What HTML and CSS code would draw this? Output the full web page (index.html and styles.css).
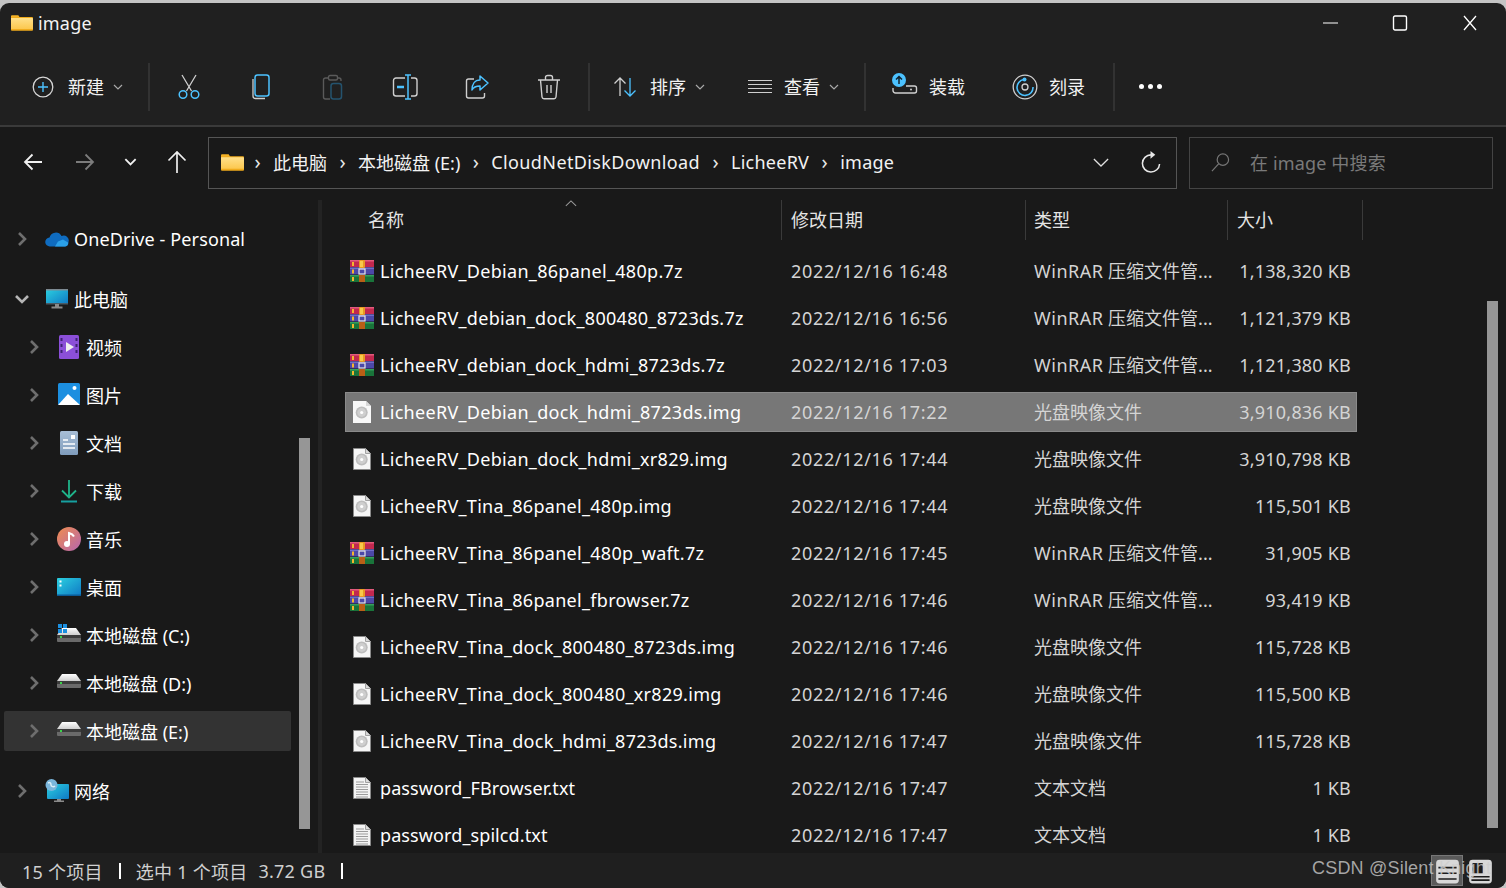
FILE: index.html
```html
<!DOCTYPE html>
<html lang="zh-CN">
<head>
<meta charset="utf-8">
<title>image</title>
<link rel="stylesheet" href="styles.css">
</head>
<body>
<svg class="defs" aria-hidden="true">
  <defs>
    <linearGradient id="fold" x1="0" y1="0" x2="0" y2="1"><stop offset="0" stop-color="#ffe08a"/><stop offset="1" stop-color="#fcc84f"/></linearGradient>
    <linearGradient id="screen" x1="0" y1="0" x2="1" y2="1"><stop offset="0" stop-color="#2bd0e0"/><stop offset="1" stop-color="#0f78c4"/></linearGradient>
    <linearGradient id="music" x1="0" y1="0" x2="1" y2="1"><stop offset="0" stop-color="#f08d4e"/><stop offset="1" stop-color="#b566b0"/></linearGradient>
    <linearGradient id="doc" x1="0" y1="0" x2="0" y2="1"><stop offset="0" stop-color="#a8bed6"/><stop offset="1" stop-color="#7f9cbc"/></linearGradient>
    <linearGradient id="drive" x1="0" y1="0" x2="0" y2="1"><stop offset="0" stop-color="#fff"/><stop offset="1" stop-color="#cfcfcf"/></linearGradient>
    <symbol id="i-folder" viewBox="0 0 24 18">
      <path d="M0 2a1 1 0 0 1 1-1h7l2 3h-10z" fill="#f5b225"/>
      <rect x="0" y="3" width="24" height="15" rx="1" fill="#f0ab1c"/>
      <path d="M0 4h23a1 1 0 0 1 1 1v11H0z" fill="url(#fold)"/>
    </symbol>
    <symbol id="i-chev-r" viewBox="0 0 12 16">
      <path d="M3 2l6 6-6 6" fill="none" stroke="#6e6e6e" stroke-width="2.6"/>
    </symbol>
    <symbol id="i-chev-d" viewBox="0 0 16 12">
      <path d="M2 3l6 6 6-6" fill="none" stroke="#b5b5b5" stroke-width="2.6"/>
    </symbol>
    <symbol id="i-caret" viewBox="0 0 10 6">
      <path d="M1 1l4 4 4-4" fill="none" stroke="#a8a8a8" stroke-width="1.2"/>
    </symbol>
    <symbol id="i-rar" viewBox="0 0 24 22">
      <rect x="0" y="0" width="24" height="7" fill="#c2284f"/>
      <rect x="0" y="0" width="24" height="1.5" fill="#e25a7c"/>
      <rect x="0" y="7.5" width="24" height="7" fill="#4c48a8"/>
      <rect x="0" y="7.5" width="24" height="1.5" fill="#6f6cc8"/>
      <rect x="0" y="15" width="24" height="7" fill="#19743a"/>
      <rect x="0" y="15" width="24" height="1.5" fill="#35a05a"/>
      <rect x="2" y="2" width="2" height="4" fill="#f5b52e"/>
      <rect x="2" y="9.5" width="2" height="4" fill="#f5b52e"/>
      <rect x="2" y="17" width="2" height="4" fill="#f5b52e"/>
      <rect x="9" y="0" width="6" height="8" rx="1" fill="#e89a22"/>
      <rect x="10" y="1" width="3" height="6" fill="#f8c94a"/>
      <rect x="9" y="9" width="6" height="5" fill="none" stroke="#e8e8e8" stroke-width="1.2"/>
      <rect x="9" y="15" width="6" height="7" fill="#b95f16"/>
    </symbol>
    <symbol id="i-disc" viewBox="0 0 18 22">
      <path d="M.5.5h12l5 5v16H.5z" fill="#f6f6f6" stroke="#8a8a8a"/>
      <path d="M12.5.5v5h5" fill="#d8d8d8" stroke="#a0a0a0"/>
      <circle cx="8.7" cy="11.5" r="6" fill="#bdbdbd"/>
      <circle cx="8.7" cy="11.5" r="4.4" fill="#cfcfcf"/>
      <circle cx="8.7" cy="11.5" r="1.6" fill="#fff"/>
    </symbol>
    <symbol id="i-discsel" viewBox="0 0 18 22">
      <path d="M0 0h13l5 5v17H0z" fill="#f8f8f8"/>
      <path d="M13 0v5h5" fill="#d8d8d8"/>
      <circle cx="8.7" cy="11.5" r="6" fill="#bdbdbd"/>
      <circle cx="8.7" cy="11.5" r="4.4" fill="#cfcfcf"/>
      <circle cx="8.7" cy="11.5" r="1.6" fill="#fff"/>
    </symbol>
    <symbol id="i-txt" viewBox="0 0 18 22">
      <path d="M.5.5h12l5 5v16H.5z" fill="#f4f4f4" stroke="#8a8a8a"/>
      <path d="M12.5.5v5h5" fill="#dcdcdc" stroke="#a0a0a0"/>
      <path d="M3 5h8M3 7.5h12M3 10h12M3 12.5h12M3 15h12M3 17.5h12M3 20h12" stroke="#9c9c9c" stroke-width="1"/>
    </symbol>
    <symbol id="i-hdd" viewBox="0 0 24 14">
      <path d="M5 0h14l5 7H0z" fill="url(#drive)"/>
      <path d="M0 7h24v6a1 1 0 0 1-1 1H1a1 1 0 0 1-1-1z" fill="#6a6a6a"/>
      <path d="M0 7h24v3H0z" fill="#3c3c3c"/>
      <rect x="3" y="8" width="2" height="2" fill="#3bd54a"/>
    </symbol>
  </defs>
</svg>

<div class="window">
  <header class="titlebar">
    <svg class="title-folder"><use href="#i-folder"/></svg>
    <span class="title-text">image</span>
    <div class="win-controls">
      <svg class="win-btn" viewBox="0 0 16 16"><path d="M1 8h16" stroke="#fff" stroke-width="1.2"/></svg>
      <svg class="win-btn" viewBox="0 0 16 16"><rect x="1.5" y="1" width="13" height="14" rx="1.5" fill="none" stroke="#fff" stroke-width="1.4"/></svg>
      <svg class="win-btn" viewBox="0 0 16 16"><path d="M2 1l12 14M14 1L2 15" stroke="#fff" stroke-width="1.3"/></svg>
    </div>
  </header>

  <div class="toolbar">
    <div class="tool-new">
      <svg class="ico22" viewBox="0 0 22 22"><circle cx="11" cy="11" r="9.8" fill="none" stroke="#d5d5d5" stroke-width="1.3"/><path d="M11 6v10M6 11h10" stroke="#4cc2ff" stroke-width="1.4"/></svg>
      <span class="tool-label">新建</span>
      <svg class="caret"><use href="#i-caret"/></svg>
    </div>
    <i class="tool-sep"></i>
    <div class="tool-icons">
      <div class="tool-icon"><svg class="ico26" viewBox="0 0 26 26"><path d="M6 1l9.5 16M20 1l-9.5 16" fill="none" stroke="#cfcfcf" stroke-width="1.3"/><circle cx="7" cy="20.5" r="3.8" fill="none" stroke="#4cc2ff" stroke-width="1.5"/><circle cx="19" cy="20.5" r="3.8" fill="none" stroke="#4cc2ff" stroke-width="1.5"/></svg></div>
      <div class="tool-icon"><svg class="ico26" viewBox="0 0 26 26"><path d="M5 5v17a2.500 2.500 0 0 0 2.500 2.500H17" fill="none" stroke="#cfcfcf" stroke-width="1.300"/><rect x="7" y="1" width="14" height="21" rx="2.500" fill="#202020" stroke="#4cc2ff" stroke-width="1.500"/></svg></div>
      <div class="tool-icon"><svg class="ico26" viewBox="0 0 26 26"><path d="M9 4H5.500A2 2 0 0 0 3.500 6v17a2 2 0 0 0 2 2H10M17 4h2a2 2 0 0 1 2 2v1" fill="none" stroke="#5a5a5a" stroke-width="1.400"/><rect x="8.500" y="1.500" width="9" height="4.500" rx="1.500" fill="none" stroke="#5a5a5a" stroke-width="1.400"/><rect x="11" y="9.500" width="10.500" height="15.500" rx="2.500" fill="#202020" stroke="#24536e" stroke-width="1.500"/></svg></div>
      <div class="tool-icon"><svg class="ico26 wide" viewBox="0 0 26 26"><path d="M13 4H4a2.500 2.500 0 0 0-2.500 2.500v13A2.500 2.500 0 0 0 4 22h9M19 4h3.500A2.500 2.500 0 0 1 25 6.500v13a2.500 2.500 0 0 1-2.500 2.500H19" fill="none" stroke="#cfcfcf" stroke-width="1.400"/><path d="M16 1v24M13 1h6M13 25h6" stroke="#4cc2ff" stroke-width="1.500"/><path d="M5 13h7" stroke="#4cc2ff" stroke-width="2.500"/></svg></div>
      <div class="tool-icon"><svg class="ico26" viewBox="0 0 26 26"><path d="M10 5H4.500A2 2 0 0 0 2.500 7v15a2 2 0 0 0 2 2h14a2 2 0 0 0 2-2v-3" fill="none" stroke="#cfcfcf" stroke-width="1.400"/><path d="M16 2l8 7-8 7v-4c-4 0-6.500 1-8 4 0-6 3-10 8-10z" fill="none" stroke="#4cc2ff" stroke-width="1.500" stroke-linejoin="round"/></svg></div>
      <div class="tool-icon"><svg class="ico26" viewBox="0 0 26 26"><path d="M2 6h22M9.500 6V3.500a2 2 0 0 1 2-2h3a2 2 0 0 1 2 2V6M4.500 6l1.500 17a2 2 0 0 0 2 1.700h10a2 2 0 0 0 2-1.700L21.500 6" fill="none" stroke="#cfcfcf" stroke-width="1.400"/><path d="M11 11v8M15 11v8" stroke="#cfcfcf" stroke-width="1.400"/></svg></div>
    </div>
    <i class="tool-sep"></i>
    <div class="tool-sort">
      <svg class="ico24" viewBox="0 0 24 24"><path d="M7 21V3M1.500 8.500L7 3l5.500 5.500" fill="none" stroke="#d0d0d0" stroke-width="1.300"/><path d="M17 3v18M11.500 15.500L17 21l5.500-5.500" fill="none" stroke="#4cc2ff" stroke-width="1.300"/></svg>
      <span class="tool-label">排序</span>
      <svg class="caret"><use href="#i-caret"/></svg>
    </div>
    <div class="tool-view">
      <svg class="ico24" viewBox="0 0 24 16"><path d="M0 1.500h24M0 5.500h24M0 9.500h24M0 13.500h24" stroke="#cfcfcf" stroke-width="1.200"/></svg>
      <span class="tool-label">查看</span>
      <svg class="caret"><use href="#i-caret"/></svg>
    </div>
    <i class="tool-sep"></i>
    <div class="tool-mount">
      <svg class="ico26 mount" viewBox="0 0 26 22"><path d="M1 15v2.500A2.500 2.500 0 0 0 3.500 20h19a2 2 0 0 0 2-2v-3a2 2 0 0 0-2-2H14" fill="none" stroke="#cfcfcf" stroke-width="1.400"/><circle cx="19" cy="16.500" r="1" fill="#cfcfcf"/><circle cx="7" cy="7" r="7" fill="#4cc2ff"/><path d="M7 11V3.500M4 6.500l3-3 3 3" fill="none" stroke="#10222e" stroke-width="1.500"/></svg>
      <span class="tool-label">装载</span>
    </div>
    <div class="tool-burn">
      <svg class="ico26" viewBox="0 0 26 26"><circle cx="13" cy="13" r="11.800" fill="none" stroke="#cfcfcf" stroke-width="1.300"/><path d="M12 5.500a8 8 0 1 0 9 7.500" fill="none" stroke="#4cc2ff" stroke-width="1.600"/><circle cx="13" cy="13" r="3" fill="none" stroke="#cfcfcf" stroke-width="1.300"/><circle cx="12.500" cy="5.500" r="2" fill="#4cc2ff"/></svg>
      <span class="tool-label">刻录</span>
    </div>
    <i class="tool-sep"></i>
    <div class="tool-more"><i></i><i></i><i></i></div>
  </div>

  <nav class="addressbar">
    <div class="nav-btns">
      <svg class="nav-btn" viewBox="0 0 20 20"><path d="M19 10H2M9.500 2.500L2 10l7.500 7.500" fill="none" stroke="#f0f0f0" stroke-width="1.800"/></svg>
      <svg class="nav-btn fwd" viewBox="0 0 20 20"><path d="M1 10h17M10.500 2.500L18 10l-7.500 7.500" fill="none" stroke="#7c7c7c" stroke-width="1.800"/></svg>
      <svg class="nav-btn down" viewBox="0 0 16 12"><path d="M2.500 3L8 8.500 13.500 3" fill="none" stroke="#f0f0f0" stroke-width="2"/></svg>
      <svg class="nav-btn up" viewBox="0 0 20 24"><path d="M10 23V2M1.500 10.500L10 2l8.500 8.500" fill="none" stroke="#f0f0f0" stroke-width="1.700"/></svg>
    </div>
    <div class="pathbox">
      <svg class="path-folder"><use href="#i-folder"/></svg>
      <span class="crumb-sep">›</span><span class="crumb">此电脑</span>
      <span class="crumb-sep">›</span><span class="crumb">本地磁盘 (E:)</span>
      <span class="crumb-sep">›</span><span class="crumb wider">CloudNetDiskDownload</span>
      <span class="crumb-sep">›</span><span class="crumb latin">LicheeRV</span>
      <span class="crumb-sep">›</span><span class="crumb latin">image</span>
      <svg class="path-drop" viewBox="0 0 18 10"><path d="M1 1l8 8 8-8" fill="none" stroke="#e0e0e0" stroke-width="1.400"/></svg>
      <svg class="path-refresh" viewBox="0 0 22 24"><path d="M11.500 4a9 9 0 1 0 9 9.500" fill="none" stroke="#e8e8e8" stroke-width="1.600"/><path d="M12 0v8l5-4z" fill="#e8e8e8" transform="translate(-1 0)"/></svg>
    </div>
    <div class="searchbox">
      <svg class="search-ico" viewBox="0 0 20 20"><circle cx="12.500" cy="7" r="6" fill="none" stroke="#767676" stroke-width="1.300"/><path d="M8 11.500L1 19" stroke="#767676" stroke-width="1.300"/></svg>
      <span class="search-text">在 image 中搜索</span>
    </div>
  </nav>

  <div class="content">
    <aside class="sidebar">
      <div class="side-group">
        <div class="side-row"><svg class="chev"><use href="#i-chev-r"/></svg><svg class="side-ico" viewBox="0 0 24 16"><path d="M5 15.500a4.500 4.500 0 0 1-.500-9 6.500 6.500 0 0 1 12-1.500 5 5 0 0 1 7 6 4.500 4.500 0 0 1-3 4.500z" fill="#0f6cc0"/><path d="M10 15.500l3-5 5-2 5 3a3.500 3.500 0 0 1-3 4z" fill="#2ba0e8"/></svg><span class="side-latin">OneDrive - Personal</span></div>
      </div>
      <div class="side-group">
        <div class="side-row"><svg class="chev open"><use href="#i-chev-d"/></svg><svg class="side-ico" viewBox="0 0 24 20"><rect x="1" y="0" width="22" height="15" rx="1" fill="url(#screen)"/><rect x="1" y="0" width="22" height="1.500" fill="#7d8a92"/><rect x="1" y="14" width="22" height="1.500" fill="#4a5a64"/><rect x="10" y="15" width="4" height="3" fill="#8a8a8a"/><rect x="6.500" y="17.500" width="11" height="2" fill="#8a8a8a"/></svg><span>此电脑</span></div>
        <div class="side-row sub"><svg class="chev"><use href="#i-chev-r"/></svg><svg class="side-ico" viewBox="0 0 24 24"><rect x="2" y="0" width="20" height="24" rx="1.500" fill="#8b4fd8"/><path d="M9 7l8 5-8 5z" fill="#eee"/><path d="M3.500 3h2v3h-2zM3.500 9h2v3h-2zM3.500 15h2v3h-2zM18.500 3h2v3h-2zM18.500 9h2v3h-2zM18.500 15h2v3h-2z" fill="#3e2273"/></svg><span>视频</span></div>
        <div class="side-row sub"><svg class="chev"><use href="#i-chev-r"/></svg><svg class="side-ico" viewBox="0 0 24 24"><rect x="1" y="0" width="22" height="22" rx="1.500" fill="#1c8fe0"/><circle cx="17.500" cy="5" r="2" fill="#fff"/><path d="M1 22L11 11l12 11z" fill="#fff"/></svg><span>图片</span></div>
        <div class="side-row sub"><svg class="chev"><use href="#i-chev-r"/></svg><svg class="side-ico" viewBox="0 0 24 24"><rect x="3" y="0" width="18" height="24" rx="1.500" fill="url(#doc)"/><path d="M6 9h5M6 13h12M6 17h12" stroke="#fff" stroke-width="1.600"/><rect x="14" y="4" width="4" height="4" fill="#fff"/></svg><span>文档</span></div>
        <div class="side-row sub"><svg class="chev"><use href="#i-chev-r"/></svg><svg class="side-ico" viewBox="0 0 24 24"><path d="M12 1v17M5 11.500l7 7 7-7" fill="none" stroke="#1fb48a" stroke-width="1.800"/><path d="M4 22.500h16" stroke="#16a0a0" stroke-width="2"/></svg><span>下载</span></div>
        <div class="side-row sub"><svg class="chev"><use href="#i-chev-r"/></svg><svg class="side-ico" viewBox="0 0 24 24"><circle cx="12" cy="12" r="12" fill="url(#music)"/><circle cx="10" cy="17" r="3" fill="#fff"/><path d="M12 17V6c2 .5 4 1.500 5 3.500" fill="none" stroke="#fff" stroke-width="2"/></svg><span>音乐</span></div>
        <div class="side-row sub"><svg class="chev"><use href="#i-chev-r"/></svg><svg class="side-ico" viewBox="0 0 24 18"><rect x="0" y="0" width="24" height="18" rx="1" fill="url(#screen)"/><rect x="0" y="16.500" width="24" height="1.500" fill="#0a5a96"/><path d="M2.500 2.500h2v2h-2zM2.500 6.500h2v2h-2z" fill="#fff"/></svg><span>桌面</span></div>
        <div class="side-row sub"><svg class="chev"><use href="#i-chev-r"/></svg><svg class="side-ico drive-c" viewBox="0 0 24 18"><g transform="translate(0 4)"><use href="#i-hdd" width="24" height="14"/></g><path d="M1 0h4v4H1zM6 0h4v4H6zM1 5h4v4H1zM6 5h4v4H6z" fill="#1b8fe0"/></svg><span>本地磁盘 (C:)</span></div>
        <div class="side-row sub"><svg class="chev"><use href="#i-chev-r"/></svg><svg class="side-ico drive"><use href="#i-hdd"/></svg><span>本地磁盘 (D:)</span></div>
        <div class="side-row sub active"><svg class="chev"><use href="#i-chev-r"/></svg><svg class="side-ico drive"><use href="#i-hdd"/></svg><span>本地磁盘 (E:)</span></div>
      </div>
      <div class="side-group">
        <div class="side-row"><svg class="chev"><use href="#i-chev-r"/></svg><svg class="side-ico" viewBox="0 0 24 24"><rect x="2" y="5" width="22" height="15" rx="1" fill="url(#screen)"/><rect x="12" y="20" width="4" height="2" fill="#8a8a8a"/><rect x="9" y="21.500" width="10" height="1.500" fill="#8a8a8a"/><circle cx="6.500" cy="6" r="6" fill="#7ab6dc"/><path d="M3 4c2-1 3 0 3 2s3 2 4 1" fill="none" stroke="#d9eef8" stroke-width="1.500"/></svg><span>网络</span></div>
      </div>
      <div class="side-scroll"></div>
    </aside>
    <div class="divider"></div>
    <main class="files">
      <div class="sort-caret"><svg viewBox="0 0 14 8"><path d="M1 7l6-6 6 6" fill="none" stroke="#9a9a9a" stroke-width="1.200"/></svg></div>
      <div class="head">
        <div class="hcell hname">名称</div>
        <div class="hcell">修改日期</div>
        <div class="hcell htype">类型</div>
        <div class="hcell hlast">大小</div>
      </div>
      <div class="rows">
        <div class="row"><svg class="ficon rar"><use href="#i-rar"/></svg><span class="fname">LicheeRV_Debian_86panel_480p.7z</span><span class="fdate">2022/12/16 16:48</span><span class="ftype"><span class="flatin">WinRAR</span> 压缩文件管...</span><span class="fsize">1,138,320 KB</span></div>
        <div class="row"><svg class="ficon rar"><use href="#i-rar"/></svg><span class="fname">LicheeRV_debian_dock_800480_8723ds.7z</span><span class="fdate">2022/12/16 16:56</span><span class="ftype"><span class="flatin">WinRAR</span> 压缩文件管...</span><span class="fsize">1,121,379 KB</span></div>
        <div class="row"><svg class="ficon rar"><use href="#i-rar"/></svg><span class="fname">LicheeRV_debian_dock_hdmi_8723ds.7z</span><span class="fdate">2022/12/16 17:03</span><span class="ftype"><span class="flatin">WinRAR</span> 压缩文件管...</span><span class="fsize">1,121,380 KB</span></div>
        <div class="row selected"><svg class="ficon page"><use href="#i-discsel"/></svg><span class="fname">LicheeRV_Debian_dock_hdmi_8723ds.img</span><span class="fdate">2022/12/16 17:22</span><span class="ftype">光盘映像文件</span><span class="fsize">3,910,836 KB</span></div>
        <div class="row"><svg class="ficon page"><use href="#i-disc"/></svg><span class="fname">LicheeRV_Debian_dock_hdmi_xr829.img</span><span class="fdate">2022/12/16 17:44</span><span class="ftype">光盘映像文件</span><span class="fsize">3,910,798 KB</span></div>
        <div class="row"><svg class="ficon page"><use href="#i-disc"/></svg><span class="fname">LicheeRV_Tina_86panel_480p.img</span><span class="fdate">2022/12/16 17:44</span><span class="ftype">光盘映像文件</span><span class="fsize">115,501 KB</span></div>
        <div class="row"><svg class="ficon rar"><use href="#i-rar"/></svg><span class="fname">LicheeRV_Tina_86panel_480p_waft.7z</span><span class="fdate">2022/12/16 17:45</span><span class="ftype"><span class="flatin">WinRAR</span> 压缩文件管...</span><span class="fsize">31,905 KB</span></div>
        <div class="row"><svg class="ficon rar"><use href="#i-rar"/></svg><span class="fname">LicheeRV_Tina_86panel_fbrowser.7z</span><span class="fdate">2022/12/16 17:46</span><span class="ftype"><span class="flatin">WinRAR</span> 压缩文件管...</span><span class="fsize">93,419 KB</span></div>
        <div class="row"><svg class="ficon page"><use href="#i-disc"/></svg><span class="fname">LicheeRV_Tina_dock_800480_8723ds.img</span><span class="fdate">2022/12/16 17:46</span><span class="ftype">光盘映像文件</span><span class="fsize">115,728 KB</span></div>
        <div class="row"><svg class="ficon page"><use href="#i-disc"/></svg><span class="fname">LicheeRV_Tina_dock_800480_xr829.img</span><span class="fdate">2022/12/16 17:46</span><span class="ftype">光盘映像文件</span><span class="fsize">115,500 KB</span></div>
        <div class="row"><svg class="ficon page"><use href="#i-disc"/></svg><span class="fname">LicheeRV_Tina_dock_hdmi_8723ds.img</span><span class="fdate">2022/12/16 17:47</span><span class="ftype">光盘映像文件</span><span class="fsize">115,728 KB</span></div>
        <div class="row"><svg class="ficon page"><use href="#i-txt"/></svg><span class="fname pw">password_FBrowser.txt</span><span class="fdate">2022/12/16 17:47</span><span class="ftype">文本文档</span><span class="fsize">1 KB</span></div>
        <div class="row"><svg class="ficon page"><use href="#i-txt"/></svg><span class="fname pw">password_spilcd.txt</span><span class="fdate">2022/12/16 17:47</span><span class="ftype">文本文档</span><span class="fsize">1 KB</span></div>
      </div>
      <div class="main-scroll"></div>
    </main>
  </div>

  <footer class="statusbar">
    <span>15 个项目</span><i class="stat-sep"></i>
    <span>选中 1 个项目</span><span class="stat-size">3.72 GB</span><i class="stat-sep"></i>
    <div class="view-btns">
      <div class="view-btn on"><svg viewBox="0 0 22 24"><rect x="1" y="2" width="20" height="21" rx="3" fill="#d8d8d8"/><path d="M3 9h16M3 14h16M3 19h16" stroke="#1c1c1c" stroke-width="1.400"/></svg></div>
      <div class="view-btn"><svg viewBox="0 0 22 24"><rect x="1" y="2" width="20" height="21" rx="3" fill="#d8d8d8"/><rect x="4" y="5" width="9" height="9" fill="#1c1c1c"/><path d="M3 17h16M3 20h16" stroke="#1c1c1c" stroke-width="1.400"/></svg></div>
    </div>
  </footer>
  <div class="watermark">CSDN @Silent Knight</div>
</div>
</body>
</html>
```

FILE: styles.css
```css
* { box-sizing: border-box; }
html, body { margin: 0; height: 100%; overflow: hidden; }
body {
  background: #c4c4c4;
  font-family: "Noto Sans", "Noto Sans CJK SC", sans-serif;
  font-size: 18px;
  color: #fff;
  padding-top: 3px;
}
.defs { width: 0; height: 0; display: block; }
svg { display: block; flex: none; }
.window {
  position: relative;
  height: 885px;
  display: flex;
  flex-direction: column;
  background: #202020;
  border-radius: 9px;
  overflow: hidden;
}

/* Title bar */
.titlebar { height: 49px; display: flex; align-items: center; padding: 0 0 10px 11px; flex: none; }
.title-folder { width: 22px; height: 17px; }
.title-text { margin-left: 5px; font-size: 18px; color: #f4f4f4; letter-spacing: .2px; }
.win-controls { margin-left: auto; display: flex; gap: 54px; padding-right: 28px; align-items: center; }
.win-btn { width: 16px; height: 16px; }

/* Toolbar */
.toolbar { height: 75px; display: flex; align-items: center; flex: none; border-bottom: 2px solid #3a3a3a; padding: 0 0 4px 32px; }
.tool-label { font-size: 18px; color: #f2f2f2; line-height: 24px; }
.tool-sep { width: 2px; height: 48px; background: #323232; flex: none; }
.caret { width: 10px; height: 6px; }
.ico22 { width: 22px; height: 22px; }
.ico24 { width: 24px; height: 24px; }
.ico26 { width: 26px; height: 26px; }
.tool-new { display: flex; align-items: center; width: 116px; }
.tool-new .tool-label { margin-left: 14px; }
.tool-new .caret { margin-left: 9px; }
.tool-icons { display: flex; padding: 0 3px; }
.tool-icon { width: 72px; display: flex; justify-content: center; }
.tool-sort { display: flex; align-items: center; padding-left: 23px; width: 158px; }
.tool-sort .tool-label { margin-left: 13px; }
.tool-sort .caret { margin-left: 9px; }
.tool-view { display: flex; align-items: center; width: 116px; }
.tool-view .ico24 { height: 16px; }
.tool-view .tool-label { margin-left: 12px; }
.tool-view .caret { margin-left: 9px; }
.tool-mount { display: flex; align-items: center; padding-left: 26px; width: 146px; }
.tool-mount .mount { height: 22px; margin-top: -6px; }
.tool-mount .tool-label { margin-left: 11px; }
.tool-burn { display: flex; align-items: center; width: 101px; }
.tool-burn .tool-label { margin-left: 11px; }
.tool-more { display: flex; gap: 4px; padding-left: 24px; }
.tool-more i { width: 5px; height: 5px; background: #fff; border-radius: 50%; }

/* Address bar */
.addressbar { height: 73px; display: flex; align-items: center; background: #191919; flex: none; padding-bottom: 2px; }
.nav-btns { width: 208px; display: flex; align-items: center; flex: none; height: 52px; padding-bottom: 2px; }
.nav-btn { width: 20px; height: 20px; margin-left: 23px; }
.nav-btn.fwd { margin-left: 32px; }
.nav-btn.down { width: 15px; height: 12px; margin-left: 28px; }
.nav-btn.up { width: 20px; height: 24px; margin-left: 29px; }
.pathbox {
  width: 969px; height: 52px; border: 1px solid #555;
  display: flex; align-items: center; padding-left: 12px; flex: none;
}
.path-folder { width: 23px; height: 18px; margin-top: -1px; margin-right: -2px; }
.crumb { font-size: 18px; color: #f2f2f2; white-space: nowrap; margin-top: -2px; }
.crumb.wider { letter-spacing: .38px; }
.crumb.latin { letter-spacing: .25px; }
.crumb-sep { font-size: 20px; color: #e8e8e8; width: 31px; text-align: center; line-height: 24px; flex: none; margin-top: -2px; }
.path-drop { width: 16px; height: 9px; margin-left: auto; margin-right: 1px; }
.path-refresh { width: 21px; height: 23px; margin-left: 30px; margin-right: 15px; }
.searchbox {
  width: 304px; height: 52px; border: 1px solid #444; margin-left: 12px;
  display: flex; align-items: center; padding-left: 21px; flex: none;
}
.search-ico { width: 19px; height: 19px; }
.search-text { margin-left: 20px; color: #7a7a7a; font-size: 18px; letter-spacing: .15px; margin-top: -2px; }

/* Content */
.content { flex: 1; display: flex; min-height: 0; background: #191919; }
.sidebar { width: 318px; flex: none; position: relative; padding: 19px 27px 0 4px; }
.divider { width: 4px; flex: none; background: #232323; }
.side-group { margin-bottom: 20px; display: flex; flex-direction: column; gap: 8px; }
.side-row { height: 40px; display: flex; align-items: center; padding-left: 12px; border-radius: 2px; font-size: 18px; color: #fff; white-space: nowrap; }
.side-row.sub { padding-left: 24px; }
.side-latin { letter-spacing: .12px; }
.chev { width: 12px; height: 16px; flex: none; }
.chev.open { width: 16px; height: 12px; margin-left: -2px; margin-right: -2px; }
.side-ico { width: 24px; height: 24px; margin: 0 5px 0 17px; flex: none; }
.side-ico.drive { height: 14px; margin-top: -4px; }
.side-ico.drive-c { height: 18px; margin-top: -4px; }
.side-row.active { background: #333; }
.side-scroll { position: absolute; left: 299px; top: 238px; width: 11px; height: 391px; background: #969696; }

/* File list */
.files { flex: 1; position: relative; padding-left: 23px; min-width: 0; }
.sort-caret { position: absolute; left: 243px; top: 0; width: 12px; height: 8px; }
.head { height: 40px; display: grid; grid-template-columns: 436px 244px 202px 136px; width: 1018px; }
.hcell { border-left: 1px solid #3a3a3a; padding-left: 9px; line-height: 40px; font-size: 18px; color: #e4e4e4; }
.hname { border-left: 0; padding-left: 23px; }
.htype { padding-left: 8px; }
.hlast { border-right: 1px solid #3a3a3a; }
.rows { width: 1012px; padding-top: 11px; display: flex; flex-direction: column; gap: 7px; }
.row {
  height: 40px; display: grid; align-items: center;
  grid-template-columns: 35px 411px 243px 203px 1fr;
  font-size: 18px; color: #fff; white-space: nowrap;
}
.row.selected { background: #777; outline: 1px solid #8a8a8a; outline-offset: -1px; }
.ficon { justify-self: start; }
.ficon.rar { width: 24px; height: 22px; margin-left: 5px; }
.ficon.page { width: 18px; height: 22px; margin-left: 8px; }
.fname { letter-spacing: .3px; }
.fname.pw { letter-spacing: .1px; }
.fdate, .ftype, .fsize { color: #d4d4d4; }
.fdate { letter-spacing: .67px; }
.ftype { margin-top: -2px; }
.flatin { letter-spacing: .5px; }
.fsize { text-align: right; padding-right: 6px; letter-spacing: .2px; }
.main-scroll { position: absolute; left: 1165px; top: 101px; width: 11px; height: 527px; background: #969696; }

/* Status bar */
.statusbar { height: 35px; flex: none; display: flex; align-items: center; padding-left: 22px; font-size: 18px; letter-spacing: .25px; color: #d0d0d0; background: #1f1f1f; }
.stat-sep { width: 2px; height: 16px; background: #fff; margin: 0 15px 0 16px; flex: none; }
.stat-size { margin-left: 11px; }
.view-btns { margin-left: auto; display: flex; gap: 3px; padding-right: 12px; align-self: stretch; align-items: center; }
.view-btn { width: 28px; height: 31px; display: flex; align-items: center; justify-content: center; }
.view-btn.on { width: 32px; background: #5a5a5a; border: 1px solid #777; }
.view-btn svg { width: 25px; height: 28px; }
.watermark { position: absolute; left: 1312px; top: 853px; font-family: "Liberation Sans", sans-serif; font-size: 18px; letter-spacing: .2px; color: rgba(205,205,205,.78); white-space: nowrap; line-height: 24px; }
```
